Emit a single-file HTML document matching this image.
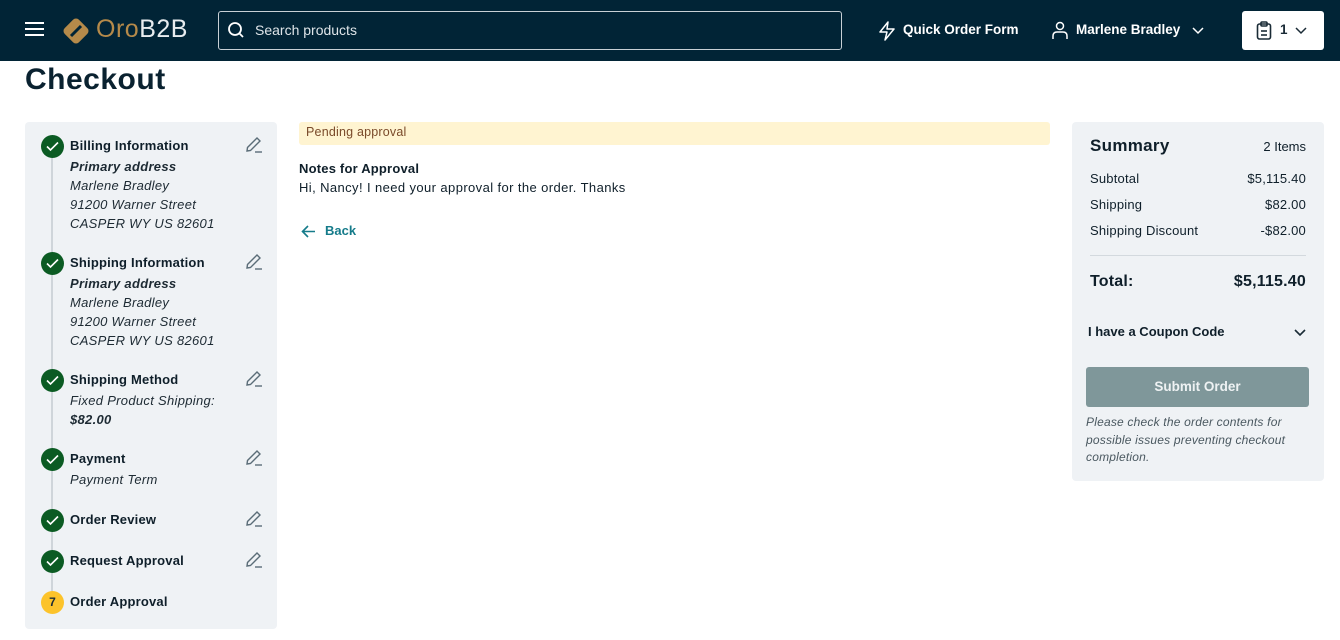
<!DOCTYPE html>
<html><head><style>
*{box-sizing:border-box;margin:0;padding:0}
body{width:1340px;height:640px;overflow:hidden;background:#fff;font-family:"Liberation Sans",sans-serif;color:#0f1f2a;position:relative}
.hdr{position:absolute;left:0;top:0;width:1340px;height:61px;background:#012436}
.abs{position:absolute}
.side{position:absolute;left:25px;top:122px;width:252px;height:507px;background:#eff2f5;border-radius:4px}
.vline{position:absolute;left:26px;top:30px;width:2px;height:455px;background:#cfd5da}
.step{position:absolute;left:0;width:252px}
.circ{position:absolute;left:16px;width:23px;height:23px;border-radius:50%;background:#0b5b23;top:-3px}
.circ svg{position:absolute;left:5px;top:6px}
.st{position:absolute;left:45px;font-size:13px;font-weight:bold;top:0;white-space:nowrap;letter-spacing:0.2px}
.it{position:absolute;left:45px;font-size:13px;font-style:italic;white-space:nowrap;color:#1d2a33;letter-spacing:0.3px}
.pen{position:absolute;left:220px;top:-2px}
.sum{position:absolute;left:1072px;top:122px;width:252px;height:359px;background:#eff2f5;border-radius:4px}
.row{position:absolute;left:18px;right:18px;font-size:13px;display:flex;justify-content:space-between;letter-spacing:0.2px}
</style></head><body>
<div class="hdr">
 <div class="abs" style="left:25px;top:22px;width:19px;height:2px;background:#fff;box-shadow:0 6px 0 #fff,0 12px 0 #fff"></div>
 <svg class="abs" style="left:60px;top:15px" width="32" height="32" viewBox="0 0 32 32"><rect x="6" y="6" width="20" height="20" rx="4" transform="rotate(45 16 16)" fill="#b58a4a"/><line x1="11" y1="21" x2="21" y2="11" stroke="#012436" stroke-width="3"/></svg>
 <div class="abs" style="left:96px;top:15px;font-size:25px;color:#b58a4a;letter-spacing:0.5px">Oro<span style="color:#e8ecef">B2B</span></div>
 <div class="abs" style="left:218px;top:11px;width:624px;height:39px;border:1px solid #c8d0d6;border-radius:3px"></div>
 <svg class="abs" style="left:227px;top:21px" width="18" height="18" viewBox="0 0 18 18" fill="none" stroke="#fff" stroke-width="1.8"><circle cx="8" cy="8" r="6"/><line x1="12.5" y1="12.5" x2="16" y2="16"/></svg>
 <div class="abs" style="left:255px;top:22px;font-size:14px;color:#dfe5e9">Search products</div>
 <svg class="abs" style="left:878px;top:21px" width="18" height="20" viewBox="0 0 18 20" fill="none" stroke="#fff" stroke-width="1.5" stroke-linejoin="round"><path d="M10 1 L2 11 H9 L7 19 L16 8 H9 Z"/></svg>
 <div class="abs" style="left:903px;top:22px;font-size:13.5px;font-weight:bold;color:#fff">Quick Order Form</div>
 <svg class="abs" style="left:1052px;top:21px" width="16" height="18" viewBox="0 0 16 18" fill="none" stroke="#fff" stroke-width="1.5"><circle cx="8" cy="5" r="3.5"/><path d="M1 18 V15 Q1 11 5 11 H11 Q15 11 15 15 V18"/></svg>
 <div class="abs" style="left:1076px;top:22px;font-size:13.5px;font-weight:bold;color:#fff">Marlene Bradley</div>
 <svg class="abs" style="left:1192px;top:27px" width="12" height="8" viewBox="0 0 12 8" fill="none" stroke="#fff" stroke-width="1.5"><path d="M1 1 L6 6 L11 1"/></svg>
 <div class="abs" style="left:1242px;top:11px;width:82px;height:39px;background:#fff;border-radius:3px"></div>
 <svg class="abs" style="left:1256px;top:21px" width="16" height="19" viewBox="0 0 16 19" fill="none" stroke="#1a2b36" stroke-width="1.6"><rect x="1.5" y="3" width="13" height="15" rx="2"/><rect x="5" y="1" width="6" height="4" rx="1"/><line x1="5" y1="10" x2="11" y2="10"/><line x1="5" y1="14" x2="11" y2="14"/></svg>
 <div class="abs" style="left:1280px;top:22px;font-size:13.5px;font-weight:bold;color:#1a2b36">1</div>
 <svg class="abs" style="left:1295px;top:27px" width="12" height="8" viewBox="0 0 12 8" fill="none" stroke="#1a2b36" stroke-width="1.5"><path d="M1 1 L6 6 L11 1"/></svg>
</div>
<div class="abs" style="left:25px;top:63px;font-size:30px;font-weight:bold;color:#0a2230;letter-spacing:0.5px">Checkout</div>

<div class="side">
 <div class="vline"></div>
 <div class="step" style="top:16px"><div class="circ"><svg width="13" height="11" viewBox="0 0 13 11" fill="none" stroke="#fff" stroke-width="1.6"><path d="M1 5.5 L4.5 9 L12 1.5"/></svg></div><div class="st">Billing Information</div><svg class="pen" width="18" height="18" viewBox="0 0 18 18" fill="none" stroke="#5b6d78" stroke-width="1.4"><path d="M2 15 L2.5 11.5 L12 2 L15 5 L5.5 14.5 Z"/><line x1="10" y1="16" x2="17" y2="16"/></svg>
  <div class="it" style="top:21px;font-weight:bold">Primary address</div><div class="it" style="top:40px">Marlene Bradley</div><div class="it" style="top:59px">91200 Warner Street</div><div class="it" style="top:78px">CASPER WY US 82601</div></div>
 <div class="step" style="top:133px"><div class="circ"><svg width="13" height="11" viewBox="0 0 13 11" fill="none" stroke="#fff" stroke-width="1.6"><path d="M1 5.5 L4.5 9 L12 1.5"/></svg></div><div class="st">Shipping Information</div><svg class="pen" width="18" height="18" viewBox="0 0 18 18" fill="none" stroke="#5b6d78" stroke-width="1.4"><path d="M2 15 L2.5 11.5 L12 2 L15 5 L5.5 14.5 Z"/><line x1="10" y1="16" x2="17" y2="16"/></svg>
  <div class="it" style="top:21px;font-weight:bold">Primary address</div><div class="it" style="top:40px">Marlene Bradley</div><div class="it" style="top:59px">91200 Warner Street</div><div class="it" style="top:78px">CASPER WY US 82601</div></div>
 <div class="step" style="top:250px"><div class="circ"><svg width="13" height="11" viewBox="0 0 13 11" fill="none" stroke="#fff" stroke-width="1.6"><path d="M1 5.5 L4.5 9 L12 1.5"/></svg></div><div class="st">Shipping Method</div><svg class="pen" width="18" height="18" viewBox="0 0 18 18" fill="none" stroke="#5b6d78" stroke-width="1.4"><path d="M2 15 L2.5 11.5 L12 2 L15 5 L5.5 14.5 Z"/><line x1="10" y1="16" x2="17" y2="16"/></svg>
  <div class="it" style="top:21px">Fixed Product Shipping:</div><div class="it" style="top:40px;font-weight:bold">$82.00</div></div>
 <div class="step" style="top:329px"><div class="circ"><svg width="13" height="11" viewBox="0 0 13 11" fill="none" stroke="#fff" stroke-width="1.6"><path d="M1 5.5 L4.5 9 L12 1.5"/></svg></div><div class="st">Payment</div><svg class="pen" width="18" height="18" viewBox="0 0 18 18" fill="none" stroke="#5b6d78" stroke-width="1.4"><path d="M2 15 L2.5 11.5 L12 2 L15 5 L5.5 14.5 Z"/><line x1="10" y1="16" x2="17" y2="16"/></svg>
  <div class="it" style="top:21px">Payment Term</div></div>
 <div class="step" style="top:390px"><div class="circ"><svg width="13" height="11" viewBox="0 0 13 11" fill="none" stroke="#fff" stroke-width="1.6"><path d="M1 5.5 L4.5 9 L12 1.5"/></svg></div><div class="st">Order Review</div><svg class="pen" width="18" height="18" viewBox="0 0 18 18" fill="none" stroke="#5b6d78" stroke-width="1.4"><path d="M2 15 L2.5 11.5 L12 2 L15 5 L5.5 14.5 Z"/><line x1="10" y1="16" x2="17" y2="16"/></svg></div>
 <div class="step" style="top:431px"><div class="circ"><svg width="13" height="11" viewBox="0 0 13 11" fill="none" stroke="#fff" stroke-width="1.6"><path d="M1 5.5 L4.5 9 L12 1.5"/></svg></div><div class="st">Request Approval</div><svg class="pen" width="18" height="18" viewBox="0 0 18 18" fill="none" stroke="#5b6d78" stroke-width="1.4"><path d="M2 15 L2.5 11.5 L12 2 L15 5 L5.5 14.5 Z"/><line x1="10" y1="16" x2="17" y2="16"/></svg></div>
 <div class="step" style="top:472px"><div class="circ" style="background:#fcc32b;font-size:12px;font-weight:bold;text-align:center;line-height:23px;color:#1a2b36">7</div><div class="st">Order Approval</div></div>
</div>

<div class="abs" style="left:299px;top:122px;width:751px;height:23px;background:#fff4d1;border-radius:3px;font-size:12.5px;color:#7a4a2a;padding:3px 7px;letter-spacing:0.2px">Pending approval</div>
<div class="abs" style="left:299px;top:161px;font-size:13px;font-weight:bold;letter-spacing:0.2px">Notes for Approval</div>
<div class="abs" style="left:299px;top:180px;font-size:13px;letter-spacing:0.4px">Hi, Nancy! I need your approval for the order. Thanks</div>
<svg class="abs" style="left:301px;top:225px" width="15" height="13" viewBox="0 0 15 13" fill="none" stroke="#157b8a" stroke-width="1.6"><path d="M7 1 L1.5 6.5 L7 12 M1.5 6.5 H14"/></svg>
<div class="abs" style="left:325px;top:223px;font-size:13px;font-weight:bold;color:#157b8a">Back</div>

<div class="sum">
 <div class="abs" style="left:18px;top:14px;font-size:17px;font-weight:bold;letter-spacing:0.3px">Summary</div>
 <div class="abs" style="right:18px;top:17px;font-size:13px">2 Items</div>
 <div class="row" style="top:49px"><span>Subtotal</span><span>$5,115.40</span></div>
 <div class="row" style="top:75px"><span>Shipping</span><span>$82.00</span></div>
 <div class="row" style="top:101px"><span>Shipping Discount</span><span>-$82.00</span></div>
 <div class="abs" style="left:18px;right:18px;top:133px;height:1px;background:#d3d9de"></div>
 <div class="row" style="top:151px;font-size:16px;font-weight:bold"><span>Total:</span><span>$5,115.40</span></div>
 <div class="abs" style="left:16px;top:202px;font-size:13px;font-weight:bold">I have a Coupon Code</div>
 <svg class="abs" style="left:222px;top:207px" width="12" height="8" viewBox="0 0 12 8" fill="none" stroke="#1a2b36" stroke-width="1.6"><path d="M1 1 L6 6 L11 1"/></svg>
 <div class="abs" style="left:14px;top:245px;width:223px;height:40px;background:#7f979a;border-radius:3px;color:#eef2f3;font-size:13.5px;font-weight:bold;text-align:center;line-height:40px">Submit Order</div>
 <div class="abs" style="left:14px;top:292px;width:230px;font-size:12px;font-style:italic;line-height:17.5px;color:#4a5860;letter-spacing:0.2px">Please check the order contents for possible issues preventing checkout completion.</div>
</div>
</body></html>
